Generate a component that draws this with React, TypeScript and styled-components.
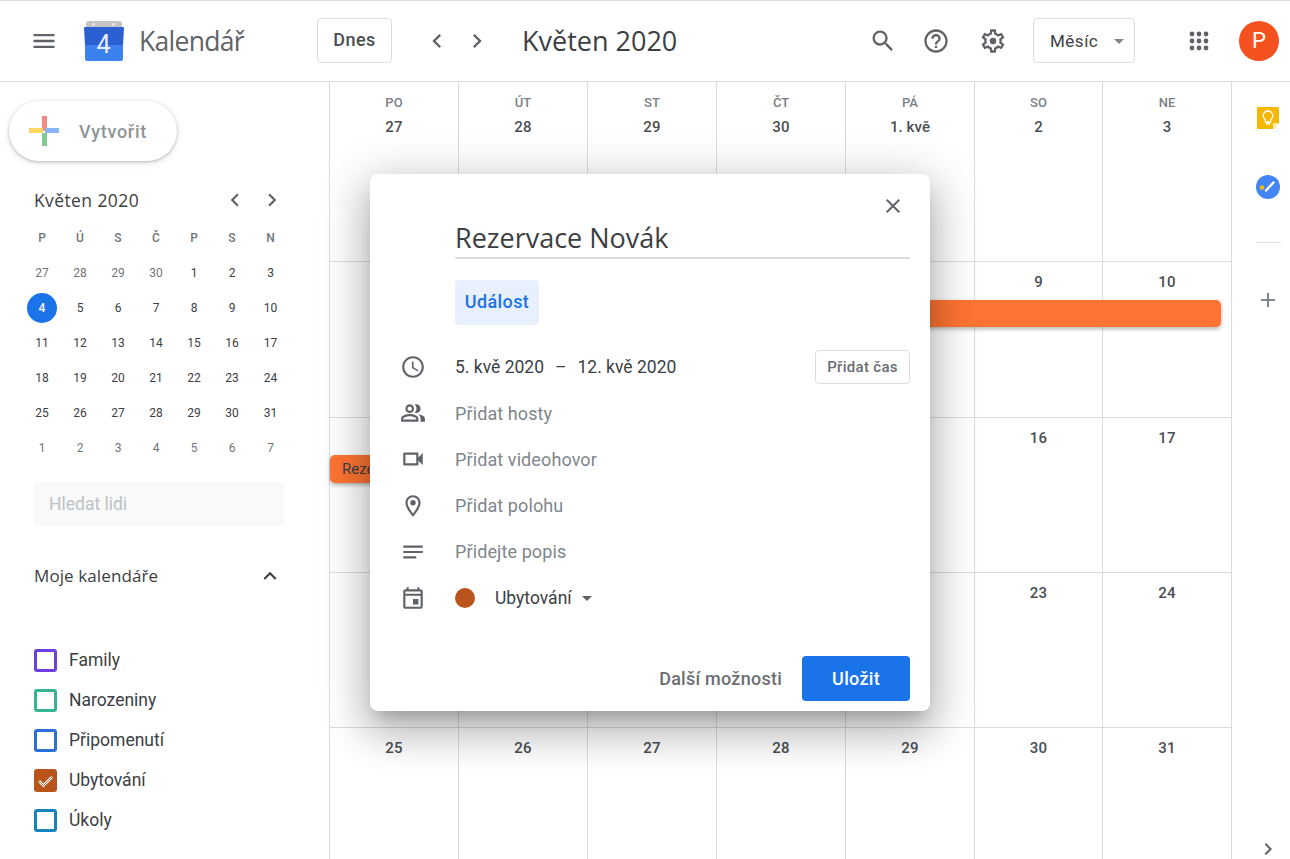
import styled, { createGlobalStyle } from "styled-components";
import {
  MdMenu,
  MdSearch,
  MdHelpOutline,
  MdChevronLeft,
  MdChevronRight,
  MdArrowDropDown,
  MdExpandLess,
  MdClose,
  MdOutlineAccessTime,
  MdOutlinePeopleAlt,
  MdOutlineVideocam,
  MdOutlineLocationOn,
  MdNotes,
  MdOutlineEvent,
  MdAdd,
} from "react-icons/md";

const GlobalStyle = createGlobalStyle`
  html, body {
    margin: 0;
    padding: 0;
    background: #fff;
    overflow: hidden;
  }
  * { box-sizing: border-box; }
  body {
    font-family: Roboto, "Liberation Sans", sans-serif;
    color: #3c4043;
  }
`;

const Page = styled.div`
  position: relative;
  width: 1290px;
  height: 859px;
  display: flex;
  flex-direction: column;
  overflow: hidden;
`;

/* top bar */
const Header = styled.header`
  flex: none;
  height: 82px;
  display: flex;
  align-items: center;
  padding: 0 11px 1px 32px;
  border-top: 1px solid #dadce0;
  border-bottom: 1px solid #dadce0;
`;

const Brand = styled.div`
  width: 285px;
  display: flex;
  align-items: center;
  color: #5f6368;
`;

const BrandName = styled.span`
  margin-left: 15px;
  font-family: "Open Sans", sans-serif;
  font-size: 26.5px;
  letter-spacing: -0.7px;
  color: #5f6368;
`;

const OutlineButton = styled.div`
  height: 45px;
  display: flex;
  align-items: center;
  justify-content: center;
  border: 1px solid #dadce0;
  border-radius: 4px;
  font-size: 18px;
  font-weight: 500;
  letter-spacing: 0.4px;
  color: #4a4e52;
`;

const TodayButton = styled(OutlineButton)`
  width: 75px;
  padding-bottom: 2px;
`;

const HeaderIcon = styled.div<{ $gap: number }>`
  width: 28px;
  height: 28px;
  flex: none;
  margin-left: ${(p) => p.$gap}px;
  display: flex;
  align-items: center;
  justify-content: center;
  color: #5f6368;
`;

const MonthTitle = styled.h1`
  margin: 0 0 0 31px;
  font-family: "Open Sans", sans-serif;
  font-size: 27px;
  font-weight: 400;
  color: #3c4043;
`;

const HeaderRight = styled.div`
  margin-left: auto;
  display: flex;
  align-items: center;
`;

const ViewSelect = styled(OutlineButton)`
  width: 102px;
  margin-left: 26px;
  padding: 0 3px 0 16px;
  justify-content: space-between;
  font-size: 17px;
  font-weight: 400;
  letter-spacing: 0.5px;
  color: #3c4043;
`;

const Avatar = styled.div`
  width: 40px;
  height: 40px;
  margin-left: 26px;
  border-radius: 50%;
  background: #f4511e;
  color: #fff;
  font-size: 22px;
  display: flex;
  align-items: center;
  justify-content: center;
`;

/* main area */
const Main = styled.div`
  flex: 1;
  display: flex;
  min-height: 0;
`;

const Sidebar = styled.aside`
  flex: none;
  width: 330px;
  border-right: 1px solid #dadce0;
`;

const CreateButton = styled.div`
  width: 168px;
  height: 60px;
  margin: 19px 0 0 9px;
  padding-left: 19px;
  display: flex;
  align-items: center;
  gap: 19px;
  border-radius: 30px;
  background: #fff;
  box-shadow: 0 1px 3px rgba(60, 64, 67, 0.3), 0 2px 6px 1px rgba(60, 64, 67, 0.1);
  font-size: 18px;
  font-weight: 500;
  letter-spacing: 0.7px;
  color: #8f9499;
`;

const MiniHeader = styled.div`
  height: 30px;
  margin: 24px 0 0 34px;
  display: flex;
  align-items: center;
  font-family: "Open Sans", sans-serif;
  font-size: 17.5px;
  font-weight: 500;
  letter-spacing: 0.4px;
  color: #3c4043;
`;

const MiniNav = styled.div`
  margin-left: 83px;
  display: flex;
  gap: 11px;
  color: #5f6368;
`;

const MiniGrid = styled.div`
  width: 266px;
  margin: 5px 0 0 23px;
  display: grid;
  grid-template-columns: repeat(6, 38px) 39px;
  grid-auto-rows: 35px;
  justify-items: center;
  align-items: center;
  font-size: 12px;
`;

const MiniHead = styled.span`
  font-size: 12px;
  font-weight: 500;
  color: #70757a;
`;

const MiniDay = styled.span<{ $muted?: boolean; $selected?: boolean }>`
  width: 30px;
  height: 30px;
  display: flex;
  align-items: center;
  justify-content: center;
  border-radius: 50%;
  font-weight: ${(p) => (p.$selected ? 500 : 400)};
  background: ${(p) => (p.$selected ? "#1a73e8" : "transparent")};
  color: ${(p) => (p.$selected ? "#fff" : p.$muted ? "#70757a" : "#3c4043")};
`;

const PeopleSearch = styled.div`
  width: 250px;
  height: 44px;
  margin: 17px 0 0 34px;
  padding-left: 15px;
  display: flex;
  align-items: center;
  border-radius: 4px;
  background: #f8f9f9;
  font-size: 17.5px;
  color: #bdc1c6;
`;

const SectionHeader = styled.div`
  width: 249px;
  height: 40px;
  margin: 30px 0 0 34px;
  padding-bottom: 1px;
  display: flex;
  align-items: center;
  justify-content: space-between;
  font-family: "Open Sans", sans-serif;
  font-size: 17px;
  font-weight: 500;
  letter-spacing: 0.1px;
  color: #3c4043;
`;

const CalendarList = styled.ul`
  list-style: none;
  margin: 44px 0 0 34px;
  padding: 0;
`;

const CalendarItem = styled.li`
  height: 40px;
  display: flex;
  align-items: center;
  gap: 12px;
  font-size: 17.5px;
  color: #3c4043;
`;

const Check = styled.span<{ $color: string; $checked?: boolean }>`
  width: 23px;
  height: 23px;
  display: flex;
  align-items: center;
  justify-content: center;
  border: 3px solid ${(p) => p.$color};
  border-radius: 3px;
  background: ${(p) => (p.$checked ? p.$color : "#fff")};
`;

/* month grid */
const MonthGrid = styled.div`
  flex: none;
  width: 902px;
  display: grid;
  grid-template-columns: repeat(5, 129px) 128px 129px;
  grid-template-rows: 180px 156px 155px 155px 131px;
`;

const DayCell = styled.div<{ $col: number; $row: number }>`
  grid-column: ${(p) => p.$col};
  grid-row: ${(p) => p.$row};
  padding-top: 12px;
  display: flex;
  flex-direction: column;
  align-items: center;
  border-right: 1px solid #dadce0;
  border-bottom: ${(p) => (p.$row === 5 ? "none" : "1px solid #dadce0")};
`;

const WeekdayName = styled.span`
  height: 16px;
  line-height: 16px;
  margin: 1px 0 8px;
  font-size: 13px;
  font-weight: 500;
  color: #7b8085;
`;

const DayNumber = styled.span`
  height: 16px;
  line-height: 16px;
  font-size: 15px;
  font-weight: 500;
  letter-spacing: 0.1px;
  color: #4a4e52;
`;

const EventBar = styled.div<{ $col: string; $row: number; $top: number; $right: number; $height: number }>`
  grid-column: ${(p) => p.$col};
  grid-row: ${(p) => p.$row};
  align-self: start;
  height: ${(p) => p.$height}px;
  margin: ${(p) => p.$top}px ${(p) => p.$right}px 0 0;
  padding-left: 12px;
  display: flex;
  align-items: center;
  border-radius: 5px;
  background: #ff7433;
  box-shadow: 0 2px 4px rgba(0, 0, 0, 0.3);
  font-size: 15px;
  color: #3c4043;
  white-space: nowrap;
  overflow: hidden;
`;

/* right rail */
const Rail = styled.aside`
  flex: 1;
  display: flex;
  flex-direction: column;
  align-items: center;
  padding: 24px 0 0 14px;
  color: #80868b;
`;

const RailSpacer = styled.div`
  height: 45px;
`;

const RailDivider = styled.div`
  width: 25px;
  height: 1px;
  margin: 43px 0 45px;
  background: #dadce0;
`;

const RailBottom = styled.div`
  margin-top: auto;
  height: 22px;
  color: #5f6368;
`;

/* event dialog */
const Dialog = styled.div`
  position: absolute;
  left: 370px;
  top: 174px;
  width: 560px;
  height: 537px;
  display: flex;
  flex-direction: column;
  padding: 20px 20px 10px 0;
  background: #fff;
  border-radius: 8px;
  box-shadow: 0 24px 38px 3px rgba(0, 0, 0, 0.14), 0 9px 46px 8px rgba(0, 0, 0, 0.18),
    0 11px 15px -7px rgba(0, 0, 0, 0.2);
`;

const DialogClose = styled.div`
  height: 24px;
  display: flex;
  justify-content: flex-end;
  padding-right: 5px;
  color: #5f6368;
`;

const TitleField = styled.div`
  height: 41px;
  margin-left: 85px;
  display: flex;
  align-items: center;
  border-bottom: 2px solid #dadce0;
  font-family: "Open Sans", sans-serif;
  font-size: 27px;
  color: #3c4043;
`;

const TypeChip = styled.div`
  width: 84px;
  height: 45px;
  margin: 21px 0 19px 85px;
  padding-bottom: 2px;
  display: flex;
  align-items: center;
  justify-content: center;
  border-radius: 4px;
  background: #e8f0fe;
  font-size: 18px;
  font-weight: 500;
  letter-spacing: 0.4px;
  color: #1a73e8;
`;

const FieldRow = styled.div<{ $filled?: boolean }>`
  height: 46.2px;
  padding-left: 30px;
  display: flex;
  align-items: center;
  gap: 29px;
  font-size: ${(p) => (p.$filled ? 17.5 : 18)}px;
  letter-spacing: ${(p) => (p.$filled ? 0 : 0.1)}px;
  color: ${(p) => (p.$filled ? "#3c4043" : "#80868b")};
  svg { flex: none; color: #5f6368; }
`;

const DateDash = styled.span`
  margin: 0 11px;
`;

const AddTime = styled.div`
  width: 95px;
  height: 34px;
  margin-left: auto;
  display: flex;
  align-items: center;
  justify-content: center;
  border: 1px solid #dadce0;
  border-radius: 4px;
  font-size: 15px;
  font-weight: 500;
  letter-spacing: 0.3px;
  color: #6a6e73;
`;

const CalendarDot = styled.span`
  width: 20px;
  height: 20px;
  border-radius: 50%;
  background: #b9551a;
`;

const CalendarPick = styled.div`
  display: flex;
  align-items: center;
  gap: 20px;
  color: #3c4043;
`;

const PickLabel = styled.span`
  display: flex;
  align-items: center;
  gap: 3px;
`;

const DialogFooter = styled.div`
  margin-top: auto;
  display: flex;
  align-items: center;
  justify-content: flex-end;
  gap: 20px;
`;

const MoreOptions = styled.span`
  font-size: 18px;
  font-weight: 500;
  letter-spacing: 0.25px;
  color: #6a6e73;
`;

const SaveButton = styled.div`
  width: 108px;
  height: 45px;
  display: flex;
  align-items: center;
  justify-content: center;
  border-radius: 4px;
  background: #1a73e8;
  color: #fff;
  font-size: 18px;
  font-weight: 500;
  letter-spacing: 0.3px;
`;

function CalendarLogo() {
  return (
    <svg width="40" height="40" viewBox="0 0 40 40">
      <path d="M2 8 V3 Q2 0 5 0 H35 Q38 0 38 3 V8 Z" fill="#c4c4c4" />
      <circle cx="9.5" cy="3.2" r="1.3" fill="#eee" />
      <circle cx="29.5" cy="3.2" r="1.3" fill="#eee" />
      <path d="M1 24 H39 V38 Q39 40 37 40 H3 Q1 40 1 38 Z" fill="#3b82ee" />
      <path d="M0 7 Q0 6 1 6 H39 Q40 6 40 7 L39 24 H1 Z" fill="#2c5fd2" />
      <text x="19.5" y="32" textAnchor="middle" fontFamily="Roboto, sans-serif" fontSize="25" fill="#e8eefc">
        4
      </text>
    </svg>
  );
}

function AppsDots() {
  const spots = [5, 12, 19];
  return (
    <svg width="24" height="24" viewBox="0 0 24 24" fill="#5f6368">
      {spots.map((y) => spots.map((x) => <circle key={`${x}-${y}`} cx={x} cy={y} r="2.4" />))}
    </svg>
  );
}

function SettingsIcon() {
  return (
    <svg width="30" height="30" viewBox="0 0 24 24" fill="#5f6368">
      <path d="M19.43 12.98c.04-.32.07-.64.07-.98 0-.34-.03-.66-.07-.98l2.11-1.65c.19-.15.24-.42.12-.64l-2-3.46c-.09-.16-.26-.25-.44-.25-.06 0-.12.01-.17.03l-2.49 1c-.52-.4-1.08-.73-1.69-.98l-.38-2.65C14.46 2.18 14.25 2 14 2h-4c-.25 0-.46.18-.49.42l-.38 2.65c-.61.25-1.17.59-1.69.98l-2.49-1c-.06-.02-.12-.03-.18-.03-.17 0-.34.09-.43.25l-2 3.46c-.13.22-.07.49.12.64l2.11 1.65c-.04.32-.07.65-.07.98 0 .33.03.66.07.98l-2.11 1.65c-.19.15-.24.42-.12.64l2 3.46c.09.16.26.25.44.25.06 0 .12-.01.17-.03l2.49-1c.52.4 1.08.73 1.69.98l.38 2.65c.03.24.24.42.49.42h4c.25 0 .46-.18.49-.42l.38-2.65c.61-.25 1.17-.59 1.69-.98l2.49 1c.06.02.12.03.18.03.17 0 .34-.09.43-.25l2-3.46c.12-.22.07-.49-.12-.64l-2.11-1.65zm-1.98-1.71c.04.31.05.52.05.73 0 .21-.02.43-.05.73l-.14 1.13.89.7 1.08.84-.7 1.21-1.27-.51-1.04-.42-.9.68c-.43.32-.84.56-1.25.73l-1.06.43-.16 1.13-.2 1.35h-1.4l-.19-1.35-.16-1.13-1.06-.43c-.43-.18-.83-.41-1.23-.71l-.91-.7-1.06.43-1.27.51-.7-1.21 1.08-.84.89-.7-.14-1.13c-.03-.31-.05-.54-.05-.74s.02-.43.05-.73l.14-1.13-.89-.7-1.08-.84.7-1.21 1.27.51 1.04.42.9-.68c.43-.32.84-.56 1.25-.73l1.06-.43.16-1.13.2-1.35h1.39l.19 1.35.16 1.13 1.06.43c.43.18.83.41 1.23.71l.91.7 1.06-.43 1.27-.51.7 1.21-1.07.85-.89.7.14 1.13z" />
      <circle cx="12" cy="12" r="2.8" />
    </svg>
  );
}

function CreatePlus() {
  return (
    <svg width="32" height="32" viewBox="0 0 32 32">
      <rect x="14" y="1" width="5" height="15" fill="#f28b82" />
      <rect x="1" y="13" width="14" height="5" fill="#fdd663" />
      <rect x="17" y="13" width="14" height="5" fill="#8ab4f8" />
      <rect x="14" y="18" width="5" height="13" fill="#81c995" />
    </svg>
  );
}

function KeepIcon() {
  return (
    <svg width="24" height="24" viewBox="0 0 24 24">
      <path d="M2 1 H22 Q23 1 23 2 V17 L17 23 H2 Q1 23 1 22 V2 Q1 1 2 1 Z" fill="#f6b705" />
      <path d="M17 23 V17 H23 Z" fill="#fde9a6" />
      <path
        d="M12 5 a4.8 4.8 0 0 0 -2.6 8.8 V16 h5.2 v-2.2 A4.8 4.8 0 0 0 12 5 Z M10 18 h4"
        fill="none"
        stroke="#fff"
        strokeWidth="1.3"
      />
    </svg>
  );
}

function TasksIcon() {
  return (
    <svg width="24" height="24" viewBox="0 0 24 24">
      <circle cx="12" cy="12" r="12" fill="#4285f4" />
      <circle cx="6" cy="12.5" r="2.3" fill="#fbbc04" />
      <path d="M10 15.5 L17.5 7.5" stroke="#fff" strokeWidth="2.4" strokeLinecap="round" />
    </svg>
  );
}

function CheckMark() {
  return (
    <svg width="17" height="17" viewBox="0 0 17 17">
      <path d="M2 9 L6.5 13.5 L15 5" fill="none" stroke="#fff" strokeWidth="2.6" />
      <path d="M2 9 L6.5 13.5 L15 5" fill="none" stroke="#b9551a" strokeWidth="0.8" />
    </svg>
  );
}

const weekdayNames = ["PO", "ÚT", "ST", "ČT", "PÁ", "SO", "NE"];
// days lying behind the open dialog are left empty
const monthRows = [
  ["27", "28", "29", "30", "1. kvě", "2", "3"],
  ["", "", "", "", "", "9", "10"],
  ["", "", "", "", "", "16", "17"],
  ["", "", "", "", "", "23", "24"],
  ["25", "26", "27", "28", "29", "30", "31"],
];

const miniLetters = ["P", "Ú", "S", "Č", "P", "S", "N"];
const miniDays = [
  27, 28, 29, 30, 1, 2, 3, 4, 5, 6, 7, 8, 9, 10, 11, 12, 13, 14, 15, 16, 17, 18, 19, 20, 21, 22, 23, 24, 25, 26, 27, 28,
  29, 30, 31, 1, 2, 3, 4, 5, 6, 7,
];

const calendars = [
  { name: "Family", color: "#6d3fe0" },
  { name: "Narozeniny", color: "#33b594" },
  { name: "Připomenutí", color: "#2b70d9" },
  { name: "Ubytování", color: "#b9551a", checked: true },
  { name: "Úkoly", color: "#1583bd" },
];

export default function App() {
  return (
    <Page>
      <GlobalStyle />
      <Header>
        <Brand>
          <MdMenu size={28} style={{ margin: "0 26px 0 -2px" }} />
          <CalendarLogo />
          <BrandName>Kalendář</BrandName>
        </Brand>
        <TodayButton>Dnes</TodayButton>
        <HeaderIcon $gap={31}>
          <MdChevronLeft size={28} />
        </HeaderIcon>
        <HeaderIcon $gap={12}>
          <MdChevronRight size={28} />
        </HeaderIcon>
        <MonthTitle>Květen 2020</MonthTitle>
        <HeaderRight>
          <HeaderIcon $gap={0}>
            <MdSearch size={30} />
          </HeaderIcon>
          <HeaderIcon $gap={25}>
            <MdHelpOutline size={30} />
          </HeaderIcon>
          <HeaderIcon $gap={29}>
            <SettingsIcon />
          </HeaderIcon>
          <ViewSelect>
            Měsíc
            <MdArrowDropDown size={24} color="#80868b" />
          </ViewSelect>
          <HeaderIcon $gap={50}>
            <AppsDots />
          </HeaderIcon>
          <Avatar>P</Avatar>
        </HeaderRight>
      </Header>

      <Main>
        <Sidebar>
          <CreateButton>
            <CreatePlus />
            Vytvořit
          </CreateButton>
          <MiniHeader>
            Květen 2020
            <MiniNav>
              <MdChevronLeft size={26} />
              <MdChevronRight size={26} />
            </MiniNav>
          </MiniHeader>
          <MiniGrid>
            {miniLetters.map((l, i) => (
              <MiniHead key={i}>{l}</MiniHead>
            ))}
            {miniDays.map((d, i) => (
              <MiniDay key={i} $muted={i < 4 || i > 34} $selected={i === 7}>
                {d}
              </MiniDay>
            ))}
          </MiniGrid>
          <PeopleSearch>Hledat lidi</PeopleSearch>
          <SectionHeader>
            Moje kalendáře
            <MdExpandLess size={26} color="#3c4043" />
          </SectionHeader>
          <CalendarList>
            {calendars.map((c) => (
              <CalendarItem key={c.name}>
                <Check $color={c.color} $checked={c.checked}>
                  {c.checked && <CheckMark />}
                </Check>
                {c.name}
              </CalendarItem>
            ))}
          </CalendarList>
        </Sidebar>

        <MonthGrid>
          {monthRows.map((row, r) =>
            row.map((day, c) => (
              <DayCell key={`${r}-${c}`} $col={c + 1} $row={r + 1}>
                {r === 0 && <WeekdayName>{weekdayNames[c]}</WeekdayName>}
                <DayNumber>{day}</DayNumber>
              </DayCell>
            ))
          )}
          <EventBar $col="2 / 8" $row={2} $top={38} $right={11} $height={27} />
          <EventBar $col="1 / 3" $row={3} $top={37} $right={0} $height={28}>
            Rezervace Novák
          </EventBar>
        </MonthGrid>

        <Rail>
          <KeepIcon />
          <RailSpacer />
          <TasksIcon />
          <RailDivider />
          <MdAdd size={24} />
          <RailBottom>
            <MdChevronRight size={24} />
          </RailBottom>
        </Rail>
      </Main>

      <Dialog>
        <DialogClose>
          <MdClose size={24} />
        </DialogClose>
        <TitleField>Rezervace Novák</TitleField>
        <TypeChip>Událost</TypeChip>
        <FieldRow $filled>
          <MdOutlineAccessTime size={26} />
          <span>
            5. kvě 2020
            <DateDash>–</DateDash>
            12. kvě 2020
          </span>
          <AddTime>Přidat čas</AddTime>
        </FieldRow>
        <FieldRow>
          <MdOutlinePeopleAlt size={26} />
          Přidat hosty
        </FieldRow>
        <FieldRow>
          <MdOutlineVideocam size={26} />
          Přidat videohovor
        </FieldRow>
        <FieldRow>
          <MdOutlineLocationOn size={26} />
          Přidat polohu
        </FieldRow>
        <FieldRow>
          <MdNotes size={26} />
          Přidejte popis
        </FieldRow>
        <FieldRow $filled>
          <MdOutlineEvent size={26} />
          <CalendarPick>
            <CalendarDot />
            <PickLabel>
              Ubytování
              <MdArrowDropDown size={24} />
            </PickLabel>
          </CalendarPick>
        </FieldRow>
        <DialogFooter>
          <MoreOptions>Další možnosti</MoreOptions>
          <SaveButton>Uložit</SaveButton>
        </DialogFooter>
      </Dialog>
    </Page>
  );
}
